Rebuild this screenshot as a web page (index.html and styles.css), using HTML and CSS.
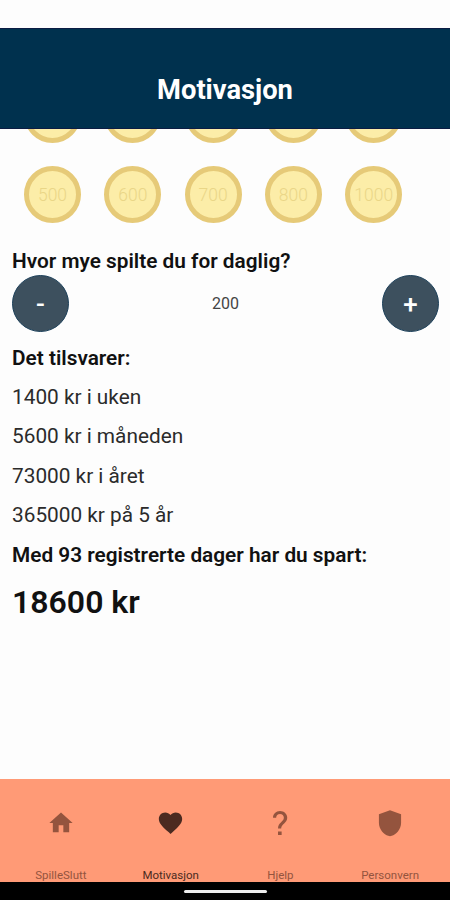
FILE: index.html
```html
<!DOCTYPE html>
<html lang="no">
<head>
  <meta charset="UTF-8">
  <meta name="viewport" content="width=device-width, initial-scale=1.0">
  <title>Motivasjon</title>
  <link rel="stylesheet" href="styles.css">
</head>
<body>
  <header class="header">
    <h1>Motivasjon</h1>
  </header>

  <main class="content">
    <div class="coins">
      <div class="coin"></div>
      <div class="coin"></div>
      <div class="coin"></div>
      <div class="coin"></div>
      <div class="coin"></div>
      <div class="coin">500</div>
      <div class="coin">600</div>
      <div class="coin">700</div>
      <div class="coin">800</div>
      <div class="coin">1000</div>
    </div>

    <h2 class="question">Hvor mye spilte du for daglig?</h2>
    <div class="stepper">
      <button>-</button>
      <span>200</span>
      <button>+</button>
    </div>

    <div class="summary">
      <h2>Det tilsvarer:</h2>
      <p>1400 kr i uken</p>
      <p>5600 kr i måneden</p>
      <p>73000 kr i året</p>
      <p>365000 kr på 5 år</p>
      <h2>Med 93 registrerte dager har du spart:</h2>
    </div>
    <p class="total">18600 kr</p>
  </main>

  <nav class="tabs">
    <a class="tab">
      <svg width="28" height="28" viewBox="0 0 24 24"><path d="M10 20v-6h4v6h5v-8h3L12 3 2 12h3v8z"/></svg>
      <span>SpilleSlutt</span>
    </a>
    <a class="tab active">
      <svg width="29" height="28" viewBox="0 0 24 24"><path d="M12 21.35l-1.45-1.32C5.4 15.36 2 12.28 2 8.5 2 5.42 4.42 3 7.5 3c1.74 0 3.41.81 4.5 2.09C13.09 3.81 14.76 3 16.5 3 19.58 3 22 5.42 22 8.5c0 3.78-3.4 6.86-8.55 11.54L12 21.35z"/></svg>
      <span>Motivasjon</span>
    </a>
    <a class="tab">
      <svg width="28" height="28" viewBox="0 0 24 24"><path d="M10.3 19.2h3.1v3.1h-3.1zM12 1.7C8.6 1.7 6 4.2 6 7.5h2.7c0-2 1.300-3.200 3.300-3.200s3.300 1.300 3.300 3.200c0 3.500-5 4-5 9.300H13c0-3.900 5.200-4.700 5.200-9.300 0-3.400-2.700-5.800-6.200-5.800z"/></svg>
      <span>Hjelp</span>
    </a>
    <a class="tab">
      <svg width="28" height="28" viewBox="0 0 24 24"><path d="M12 1L2.500 4.500V12c0 5.500 4.500 10 8 11q1.500.5 3 0c3.500-1 8-5.500 8-11V4.500z"/></svg>
      <span>Personvern</span>
    </a>
  </nav>
  <footer class="system-bar"><div class="handle"></div></footer>
</body>
</html>
```

FILE: styles.css
```css
* {
  box-sizing: border-box;
}
body {
  margin: 0;
  height: 900px;
  padding-top: 28px;
  display: flex;
  flex-direction: column;
  overflow: hidden;
  font-family: Roboto, sans-serif;
  background: #fdfdfd;
  color: #111;
}
h1, h2, p {
  margin: 0;
  white-space: nowrap;
}
.header {
  height: 101px;
  flex-shrink: 0;
  padding-top: 40px;
  text-align: center;
  background: #00314e;
  border-top: 1px solid #0b1c43;
  border-bottom: 1px solid #0b1c43;
  color: white;
}
.header h1 {
  font-size: 27.3px;
  line-height: 42px;
  font-weight: 700;
}
.content {
  flex: 1;
  min-height: 0;
  overflow: hidden;
  display: flex;
  flex-direction: column;
  padding: 0 11px 0 12px;
}
.coins {
  display: grid;
  grid-template-columns: repeat(5, 57px);
  gap: 23px 23.3px;
  margin-top: -43px;
  padding-left: 12px;
}
.coin {
  height: 57px;
  border: 5.5px solid #e6ca78;
  border-radius: 50%;
  background: #fceda8;
  color: #ead687;
  font-size: 17.5px;
  font-weight: 300;
  display: flex;
  justify-content: center;
  align-items: center;
  padding-top: 1px;
}
h2 {
  font-size: 20.8px;
  line-height: 28px;
  font-weight: 600;
}
.question {
  margin-top: 24px;
}
.stepper {
  display: flex;
  justify-content: space-between;
  align-items: center;
  font-size: 16px;
  color: #444;
}
.stepper button {
  width: 57px;
  height: 57px;
  border: 1px solid #1c405a;
  border-radius: 50%;
  padding: 0;
  background: #3d505e;
  color: white;
  font-family: inherit;
  font-size: 26px;
  font-weight: 500;
}
.summary {
  margin-top: 6.6px;
}
.summary h2,
.summary p {
  line-height: 39.4px;
}
.summary p {
  font-size: 20.8px;
  color: #2b2b2b;
}
.total {
  font-size: 32px;
  line-height: 55px;
  font-weight: 600;
}
.tabs {
  height: 103px;
  flex-shrink: 0;
  display: flex;
  padding: 0 5px 0 6px;
  background: #ff9a76;
}
.tab {
  flex: 1;
  display: flex;
  flex-direction: column;
  align-items: center;
  justify-content: space-between;
  padding-top: 30px;
  color: #94543e;
  font-size: 11.5px;
  line-height: 14px;
}
.tab svg {
  fill: currentColor;
}
.active {
  color: #4b2a20;
}
.system-bar {
  height: 18px;
  flex-shrink: 0;
  display: flex;
  justify-content: center;
  padding-top: 8px;
  background: #000;
}
.handle {
  width: 83px;
  height: 3px;
  border-radius: 2px;
  background: #eee;
}
```
